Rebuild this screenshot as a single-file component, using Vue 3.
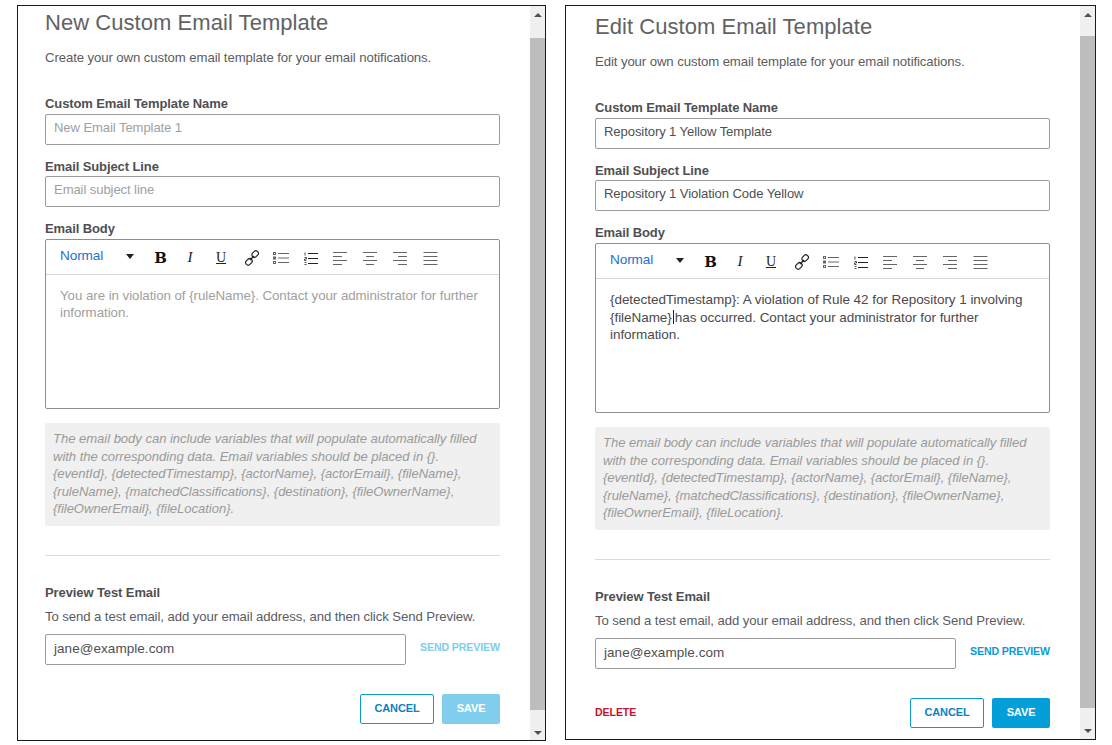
<script setup>
const note = 'The email body can include variables that will populate automatically filled with the corresponding data. Email variables should be placed in {}. {eventId}, {detectedTimestamp}, {actorName}, {actorEmail}, {fileName}, {ruleName}, {matchedClassifications}, {destination}, {fileOwnerName}, {fileOwnerEmail}, {fileLocation}.'
const windows = [
  { id: 'new', title: 'New Custom Email Template', sub: 'Create your own custom email template for your email notifications.', name: '', namePh: 'New Email Template 1', subject: '', subjectPh: 'Email subject line', isEdit: false },
  { id: 'edit', title: 'Edit Custom Email Template', sub: 'Edit your own custom email template for your email notifications.', name: 'Repository 1 Yellow Template', namePh: '', subject: 'Repository 1 Violation Code Yellow', subjectPh: '', isEdit: true }
]
</script>

<template>
  <div class="page">
    <section v-for="w in windows" :key="w.id" class="win" :class="w.id">
      <div class="content">
        <h1 class="title">{{ w.title }}</h1>
        <p class="sub">{{ w.sub }}</p>

        <label class="label first">Custom Email Template Name</label>
        <div class="input" :class="{ ph: !w.name }">{{ w.name || w.namePh }}</div>

        <label class="label second">Email Subject Line</label>
        <div class="input" :class="{ ph: !w.subject }">{{ w.subject || w.subjectPh }}</div>

        <label class="label third">Email Body</label>
        <div class="editor">
          <div class="toolbar">
            <span class="normal">Normal</span>
            <span class="caret"></span>
            <span class="fmt bold">B</span>
            <span class="fmt ital">I</span>
            <span class="fmt under">U</span>
            <svg class="ico link" width="16" height="16" viewBox="0 0 16 16" fill="none" stroke="#222" stroke-width="1.2">
              <rect x="7.6" y="1.6" width="7" height="5" rx="2.4" transform="rotate(-45 11.1 4.1)" />
              <rect x="1.4" y="9.4" width="7" height="5" rx="2.4" transform="rotate(-45 4.9 11.9)" />
              <path d="M6 10l4-4" />
            </svg>
            <svg class="ico list" width="16" height="12" viewBox="0 0 16 12" fill="none" stroke="#666">
              <rect x="0.5" y="0.5" width="2" height="2" /><rect x="0.5" y="5" width="2" height="2" /><rect x="0.5" y="9.5" width="2" height="2" />
              <path d="M5 1.5h11M5 6h11M5 10.5h11" />
            </svg>
            <svg class="ico olist" width="14" height="13" viewBox="0 0 14 13" fill="none" stroke="#222">
              <path d="M1 .5v3M.5 5.5h2v1.5h-2v1.5h2M.5 10.5h2M.5 12.5h2" stroke-width=".8" />
              <path d="M4 1.5h10M4 6.5h10M4 11.5h10" stroke-width="1.2" />
            </svg>
            <svg class="ico al" width="14" height="13" viewBox="0 0 14 13" stroke="#666"><path d="M0 .5h14M0 4.5h9M0 8.5h14M0 12.5h9" /></svg>
            <svg class="ico ac" width="14" height="13" viewBox="0 0 14 13" stroke="#666"><path d="M0 .5h14M3 4.5h8M0 8.5h14M3 12.5h8" /></svg>
            <svg class="ico ar" width="14" height="13" viewBox="0 0 14 13" stroke="#666"><path d="M0 .5h14M5 4.5h9M0 8.5h14M5 12.5h9" /></svg>
            <svg class="ico aj" width="14" height="13" viewBox="0 0 14 13" stroke="#666"><path d="M0 .5h14M0 4.5h14M0 8.5h14M0 12.5h14" /></svg>
          </div>
          <div v-if="w.isEdit" class="body">
            <div>{detectedTimestamp}: A violation of Rule 42 for Repository 1 involving</div>
            <div>{fileName}<span class="cursor"></span>has occurred. Contact your administrator for further</div>
            <div>information.</div>
          </div>
          <div v-else class="body ph">You are in violation of {ruleName}. Contact your administrator for further information.</div>
        </div>

        <div class="note">{{ note }}</div>
        <hr class="rule" />

        <div class="label preview">Preview Test Email</div>
        <p class="hint">To send a test email, add your email address, and then click Send Preview.</p>
        <div class="send">
          <div class="input mail">jane@example.com</div>
          <a class="send-link" :class="{ off: !w.isEdit }">SEND PREVIEW</a>
        </div>

        <div class="actions">
          <a v-if="w.isEdit" class="delete">DELETE</a>
          <button class="btn cancel">CANCEL</button>
          <button class="btn save" :class="{ off: !w.isEdit }">SAVE</button>
        </div>
      </div>

      <div class="bar">
        <span class="arrow up"></span>
        <span class="thumb"></span>
        <span class="arrow down"></span>
      </div>
    </section>
  </div>
</template>

<style>
html, body { margin: 0; background: #fff; }
</style>

<style scoped>
.page {
  width: 1112px;
  height: 745px;
  box-sizing: border-box;
  padding: 5px 0 0 17px;
  display: flex;
  gap: 19px;
  align-items: flex-start;
  overflow: hidden;
  font-family: "Liberation Sans", Arial, sans-serif;
  color: #5c5c5f;
}
.win {
  display: flex;
  box-sizing: border-box;
  border: 1px solid #1a1a1a;
  background: #fff;
  overflow: hidden;
}
.win.new { width: 529px; height: 736px; }
.win.edit { width: 531px; height: 735px; }
.content { flex: 1; min-width: 0; box-sizing: border-box; }
.new .content { padding: 0 30px 0 27px; }
.edit .content { padding: 4px 30px 0 29px; }

.title {
  margin: 0;
  height: 34px;
  font-size: 22px;
  line-height: 34px;
  font-weight: 400;
  color: #626265;
  letter-spacing: .05px;
}
.sub { margin: 0; padding-top: 9px; height: 18px; font-size: 13.2px; line-height: 18px; letter-spacing: -.1px; }
.label {
  display: block;
  font-size: 13px;
  line-height: 16px;
  font-weight: 700;
  color: #4f4f52;
  letter-spacing: -.1px;
}
.first { margin-top: 29px; margin-bottom: 2px; }
.second { margin-top: 14px; margin-bottom: 1px; }
.third { margin-top: 14px; margin-bottom: 2px; }
.input {
  box-sizing: border-box;
  height: 31px;
  border: 1px solid #9b9b9b;
  border-radius: 2px;
  padding: 0 8px;
  font-size: 13.1px;
  line-height: 26px;
  color: #4f4f52;
  letter-spacing: -.1px;
}
.ph { color: #a0a0a0; }
.editor { box-sizing: border-box; height: 170px; border: 1px solid #8f8f8f; border-radius: 2px; }
.toolbar {
  display: flex;
  align-items: center;
  height: 35px;
  box-sizing: border-box;
  border-bottom: 1px solid #d8d8d8;
  padding-left: 14px;
}
.normal { width: 66px; font-size: 13.6px; color: #1f6fd1; margin-top: -3px; letter-spacing: -.1px; }
.caret { width: 0; height: 0; border: 4px solid transparent; border-top: 5px solid #222; border-bottom: 0; margin-right: 20px; margin-top: -1px; }
.fmt { font-family: "Liberation Serif", serif; color: #222; text-align: center; margin-top: 1px; }
.bold { width: 13px; font-family: "DejaVu Serif", serif; font-size: 15px; font-weight: 700; color: #111; margin-right: 20px; }
.ital { width: 6px; font-size: 15px; font-style: italic; margin-right: 22px; }
.under { width: 12px; font-size: 14px; text-decoration: underline; margin-right: 17px; }
.ico { margin-top: 2px; flex: none; }
.link { margin-right: 13px; }
.list { margin-right: 15px; }
.olist { margin-right: 15px; }
.al, .ac, .ar { margin-right: 16px; }
.aj { margin-right: 0; width: 15px; }
.body { padding: 12px 14px 0; font-size: 13.5px; line-height: 17.5px; color: #4a4a4d; letter-spacing: -.05px; }
.body.ph { color: #a0a0a0; font-size: 13.3px; line-height: 17px; }
.cursor { display: inline-block; width: 1px; height: 14px; background: #222; margin: 0 1px; vertical-align: -2px; }
.note {
  box-sizing: border-box;
  height: 103px;
  margin-top: 14px;
  padding: 7px 8px 0;
  background: #f0f0f0;
  border-radius: 2px;
  font-size: 13.1px;
  line-height: 17.5px;
  font-style: italic;
  color: #9a9a9a;
  letter-spacing: -.05px;
}
.rule { margin: 29px 0 0; border: 0; border-top: 1px solid #dcdcdc; }
.preview { margin-top: 29px; }
.hint { margin: 8px 0 0; font-size: 13.2px; line-height: 16px; letter-spacing: -.1px; }
.send { display: flex; align-items: center; justify-content: space-between; margin-top: 9px; }
.mail { width: 361px; font-size: 13.5px; line-height: 27px; color: #4f4f52; letter-spacing: .05px; }
.send-link { font-size: 10.6px; font-weight: 700; color: #0a9bd6; letter-spacing: -.1px; margin-top: -6px; }
.send-link.off { color: #80cdee; }
.actions { display: flex; align-items: center; justify-content: flex-end; gap: 8px; margin-top: 29px; }
.delete { margin-right: auto; margin-top: -2px; font-size: 10.6px; font-weight: 700; color: #c4122f; letter-spacing: -.1px; }
.btn {
  box-sizing: border-box;
  height: 30px;
  border-radius: 2px;
  font-family: inherit;
  font-size: 11px;
  font-weight: 700;
  padding: 0 0 2px;
  letter-spacing: -.1px;
}
.cancel { width: 74px; background: #fff; border: 1px solid #0a9bd6; color: #0a83c4; }
.save { width: 58px; background: #049fd9; border: 0; color: #fff; }
.save.off { background: #80cdee; }

.bar { width: 15px; flex: none; display: flex; flex-direction: column; align-items: stretch; background: #f0f0f0; }
.arrow { width: 0; height: 0; align-self: center; border: 4px solid transparent; }
.up { border-top: 0; border-bottom: 4px solid #505050; margin-top: 7px; margin-bottom: 21px; }
.edit .up { margin-bottom: 19px; }
.down { border-bottom: 0; border-top: 4px solid #505050; margin-top: 21px; }
.thumb { flex: none; height: 672px; background: #bdbdbd; }
</style>
